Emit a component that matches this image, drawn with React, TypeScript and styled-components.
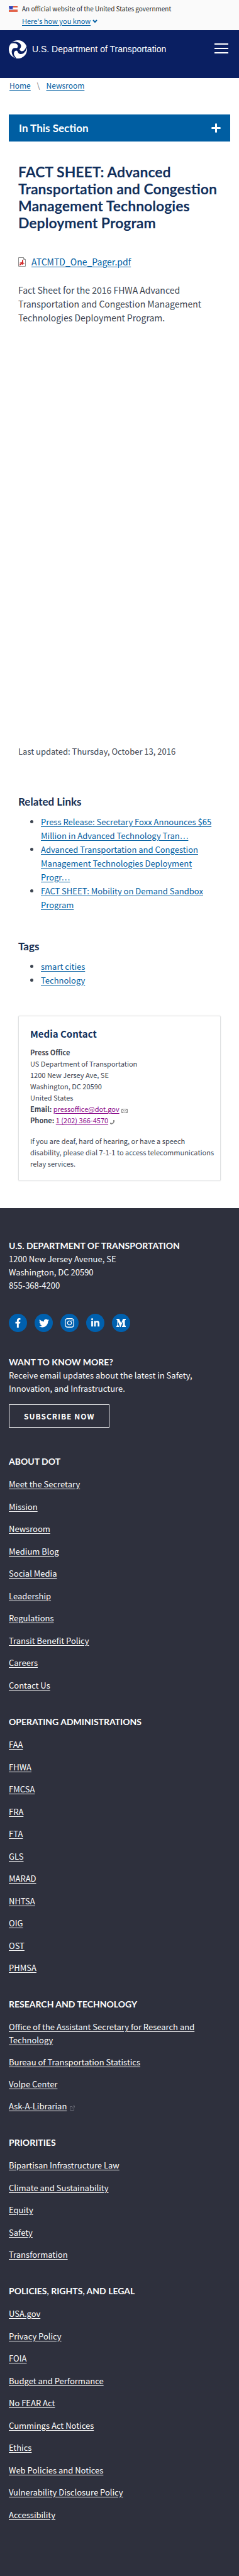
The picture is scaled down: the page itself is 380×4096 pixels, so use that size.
import React from "react";
import styled, { createGlobalStyle } from "styled-components";
import { FaFacebookF, FaTwitter, FaInstagram, FaLinkedinIn } from "react-icons/fa";

const sans = `"Noto Sans CJK SC", "Noto Sans", sans-serif`;
const lato = `Lato, "Noto Sans", sans-serif`;

const GlobalStyle = createGlobalStyle`
  *, *::before, *::after { box-sizing: border-box; }
  html { background: #2e303d; }
  body { margin: 0; background: #fff; color: #3d4551; font: 13px/22px ${sans}; }
  h1, h2, h3, p, ul, address { margin: 0; padding: 0; font-style: normal; }
  a { color: #005ea2; text-underline-offset: 2px; }
`;

const GovBanner = styled.section`
  display: flex;
  gap: 7px;
  padding: 6px 14px 7px;
  background: #fafafa;
  color: #1b1b1b;
  font-size: 10px;
  line-height: 15px;
`;

const Flag = styled.svg`
  flex: none;
  width: 14px;
  height: 9px;
  margin-top: 4px;
`;

const BannerText = styled.div`
  display: flex;
  flex-direction: column;
  align-items: flex-start;
  gap: 5px;
`;

const BannerButton = styled.button`
  display: flex;
  align-items: center;
  gap: 3px;
  padding: 0;
  border: 0;
  background: none;
  color: #005ea2;
  font: inherit;
  font-size: 11px;
  span { text-decoration: underline; text-underline-offset: 2px; }
`;

const Header = styled.header`
  display: flex;
  align-items: flex-start;
  justify-content: space-between;
  padding: 16px 17px 31px 14px;
  background: #0a1f62;
`;

const Brand = styled.a`
  display: flex;
  align-items: center;
  gap: 8px;
  color: #fff;
  font: 14px/29px "Liberation Sans", sans-serif;
  text-decoration: none;
`;

const MenuButton = styled.button`
  display: flex;
  flex-direction: column;
  gap: 5px;
  margin-top: 5px;
  padding: 0;
  border: 0;
  background: none;
  span { width: 22px; height: 2px; background: #fff; }
`;

const Breadcrumb = styled.nav`
  display: flex;
  gap: 10px;
  padding: 1px 15px 0;
  color: #71767a;
  font-size: 12px;
`;

const Main = styled.main`
  padding-bottom: 43px;
`;

const SectionToggle = styled.button`
  display: flex;
  align-items: center;
  justify-content: space-between;
  width: calc(100% - 28px);
  margin: 35px 14px 0;
  padding: 0 15px 0 16px;
  border: 0;
  background: #005ea2;
  color: #fff;
  font: bold 17px/43px ${lato};
`;

const Article = styled.article`
  padding: 0 29px;
`;

const Title = styled.h1`
  margin-top: 35px;
  color: #112f5c;
  font: bold 23px/27px ${lato};
`;

const FileLink = styled.p`
  display: flex;
  align-items: center;
  gap: 9px;
  margin-top: 37px;
  font-size: 14px;
`;

const Body = styled.p`
  margin-top: 23px;
  font-size: 14px;
`;

const Updated = styled.p`
  margin-top: 668px;
`;

const SubHeading = styled.h2<{ $space: number }>`
  margin-top: ${(p) => p.$space}px;
  color: #162e51;
  font: bold 17px/22px ${lato};
`;

const LinkList = styled.ul`
  && { margin-top: 10px; padding-left: 36px; }
`;

const Card = styled.section`
  margin-top: 45px;
  padding: 16px 8px 18px 18px;
  border: 1px solid #dfe1e2;
  border-radius: 2px;
  box-shadow: 0 0 2px #e6e6e6;
  font-size: 11px;
  line-height: 18px;
  a { color: #8b0a8b; }
  svg { margin-left: 3px; vertical-align: -3px; }
`;

const CardTitle = styled.h2`
  && { margin-bottom: 8px; }
  color: #112f5c;
  font: bold 15px/24px ${sans};
`;

const CardNote = styled.p`
  margin-top: 15px;
`;

const Footer = styled.footer`
  padding: 50px 14px 87px;
  background: #2e303d;
  color: #fff;
  line-height: 21px;
  a { color: #fff; }
`;

const FooterHeading = styled.h2`
  font: bold 14px/20px ${lato};
  text-transform: uppercase;
`;

const Social = styled.ul`
  display: flex;
  gap: 12px;
  && { margin: 35px 0 38px; }
  list-style: none;
`;

const SocialLink = styled.a`
  display: flex;
  align-items: center;
  justify-content: center;
  width: 29px;
  height: 29px;
  border-radius: 50%;
  background: #0060ae;
`;

const Subscribe = styled.button`
  display: block;
  margin: 15px 0 44px;
  padding: 0 23px;
  border: 1px solid #fff;
  background: none;
  color: #fff;
  font: bold 12px/35px ${sans};
  letter-spacing: 1px;
`;

const FooterNav = styled.nav`
  & + & { margin-top: 38px; }
`;

const FooterList = styled.ul<{ $even: number }>`
  && { margin-top: 15px; }
  list-style: none;
  li + li { margin-top: 14px; }
  li:nth-child(even) { margin-top: ${(p) => p.$even}px; }
  svg { margin-left: 5px; vertical-align: -3px; }
`;

const UsFlag = () => (
  <Flag viewBox="0 0 14 9" role="img" aria-label="U.S. flag">
    <rect width="14" height="9" fill="#fff" />
    <path d="M0 .5h14M0 2.5h14M0 4.5h14M0 6.5h14M0 8.5h14" stroke="#db3e1f" />
    <rect width="7" height="5" fill="#1e33b1" />
    <path d="M1 1.5h5M1 3.5h5" stroke="#a0a8dd" strokeDasharray="1 1" />
  </Flag>
);

const DotLogo = () => (
  <svg width="29" height="29" viewBox="0 0 100 100" aria-hidden="true">
    <circle cx="50" cy="50" r="50" fill="#fff" />
    {[0, 120, 240].map((a) => (
      <path key={a} transform={`rotate(${a} 50 50)`} fill="#0a1f62"
        d="M12 14 C38 3 63 11 67 29 C69 40 58 46 57 57 L43 55 C43 43 52 38 49 28 C45 17 31 14 14 18 Z" />
    ))}
  </svg>
);

const Chevron = () => (
  <svg width="8" height="6" viewBox="0 0 8 6" aria-hidden="true">
    <path d="M1 1l3 3 3-3" fill="none" stroke="#005ea2" strokeWidth="2" />
  </svg>
);

const Plus = () => (
  <svg width="15" height="15" viewBox="0 0 15 15" aria-hidden="true">
    <path d="M7.5 1.5v12M1.5 7.5h12" stroke="#fff" strokeWidth="3" strokeLinecap="round" />
  </svg>
);

const PdfIcon = () => (
  <svg width="12" height="15" viewBox="0 0 12 15" aria-hidden="true">
    <path d="M.5 .5h8l3 3v11H.5z" fill="#fff" stroke="#8f8f8f" />
    <path d="M8.5 .5v3h3" fill="none" stroke="#8f8f8f" />
    <path d="M2 12.5c3-1 5-4 5-8.500v8M2.500 9.500c2-1 5-1 7 .5" fill="none" stroke="#d02020" strokeWidth="1.500" />
  </svg>
);

const Mail = () => (
  <svg width="10" height="10" viewBox="0 0 10 10" aria-hidden="true">
    <path d="M.5 2.5h9v6h-9zM1 3l4 3L9 3M1 8l2.500-2.500M9 8L6.500 5.500" fill="none" stroke="#8a8a8a" />
  </svg>
);

const Phone = () => (
  <svg width="8" height="10" viewBox="0 0 8 10" aria-hidden="true">
    <path d="M1 7.5c3 1 5-1 5.500-4.500" fill="none" stroke="#888" strokeWidth="1.500" />
    <path d="M0 6l3 1v1.500L0 8zM5 2h2v3H5z" fill="#888" />
  </svg>
);

const External = () => (
  <svg width="8" height="10" viewBox="0 0 8 10" aria-hidden="true">
    <path d="M4 2.5H.5v6h6V5M3 6l4-4M5 1.500h2.500V4" fill="none" stroke="#62646f" />
  </svg>
);

const MediumIcon = () => (
  <svg width="15" height="13" viewBox="0 0 15 13" fill="#fff" aria-hidden="true">
    <path d="M0 0h4.500L7.700 7 10.500 0H15v1.500l-1.500 1V10l1.500 1.500V13H9v-1.500l1.300-1.300V4L6.800 13H6L2.800 4.500V10l1.700 1.800V13H0v-1.200L1.500 10V2.500L0 1z" />
  </svg>
);

const groups: { title: string; even: number; links: string[] }[] = [
  { title: "About DOT", even: 15, links: ["Meet the Secretary", "Mission", "Newsroom", "Medium Blog", "Social Media", "Leadership", "Regulations", "Transit Benefit Policy", "Careers", "Contact Us"] },
  { title: "Operating Administrations", even: 15, links: ["FAA", "FHWA", "FMCSA", "FRA", "FTA", "GLS", "MARAD", "NHTSA", "OIG", "OST", "PHMSA"] },
  { title: "Research and Technology", even: 14, links: ["Office of the Assistant Secretary for Research and Technology", "Bureau of Transportation Statistics", "Volpe Center", "Ask-A-Librarian"] },
  { title: "Priorities", even: 15, links: ["Bipartisan Infrastructure Law", "Climate and Sustainability", "Equity", "Safety", "Transformation"] },
  { title: "Policies, Rights, and Legal", even: 15, links: ["USA.gov", "Privacy Policy", "FOIA", "Budget and Performance", "No FEAR Act", "Cummings Act Notices", "Ethics", "Web Policies and Notices", "Vulnerability Disclosure Policy", "Accessibility"] },
];

const social = [
  { name: "Facebook", icon: <FaFacebookF size={15} /> },
  { name: "Twitter", icon: <FaTwitter size={16} /> },
  { name: "Instagram", icon: <FaInstagram size={17} /> },
  { name: "LinkedIn", icon: <FaLinkedinIn size={15} /> },
  { name: "Medium", icon: <MediumIcon /> },
];

export default function App() {
  return (
    <>
      <GlobalStyle />
      <GovBanner aria-label="Official website of the United States government">
        <UsFlag />
        <BannerText>
          <p>An official website of the United States government</p>
          <BannerButton type="button"><span>Here's how you know</span><Chevron /></BannerButton>
        </BannerText>
      </GovBanner>
      <Header>
        <Brand href="#"><DotLogo />U.S. Department of Transportation</Brand>
        <MenuButton type="button" aria-label="Menu"><span /><span /><span /></MenuButton>
      </Header>
      <Main>
        <Breadcrumb aria-label="Breadcrumb">
          <a href="#">Home</a><span>\</span><a href="#">Newsroom</a>
        </Breadcrumb>
        <SectionToggle type="button">In This Section<Plus /></SectionToggle>
        <Article>
          <Title>FACT SHEET: Advanced Transportation and Congestion Management Technologies Deployment Program</Title>
          <FileLink><PdfIcon /><a href="#">ATCMTD_One_Pager.pdf</a></FileLink>
          <Body>Fact Sheet for the 2016 FHWA Advanced Transportation and Congestion Management Technologies Deployment Program.</Body>
          <Updated>Last updated: Thursday, October 13, 2016</Updated>
          <SubHeading $space={58}>Related Links</SubHeading>
          <LinkList>
            <li><a href="#">Press Release: Secretary Foxx Announces $65 Million in Advanced Technology Tran…</a></li>
            <li><a href="#">Advanced Transportation and Congestion Management Technologies Deployment Progr…</a></li>
            <li><a href="#">FACT SHEET: Mobility on Demand Sandbox Program</a></li>
          </LinkList>
          <SubHeading $space={44}>Tags</SubHeading>
          <LinkList>
            <li><a href="#">smart cities</a></li>
            <li><a href="#">Technology</a></li>
          </LinkList>
          <Card>
            <CardTitle>Media Contact</CardTitle>
            <address>
              <b>Press Office</b><br />
              US Department of Transportation<br />
              1200 New Jersey Ave, SE<br />
              Washington, DC 20590<br />
              United States<br />
              <b>Email:</b> <a href="#">pressoffice@dot.gov</a><Mail /><br />
              <b>Phone:</b> <a href="#">1 (202) 366-4570</a><Phone />
            </address>
            <CardNote>If you are deaf, hard of hearing, or have a speech disability, please dial 7-1-1 to access telecommunications relay services.</CardNote>
          </Card>
        </Article>
      </Main>
      <Footer>
        <FooterHeading>U.S. Department of Transportation</FooterHeading>
        <address>1200 New Jersey Avenue, SE<br />Washington, DC 20590<br />855-368-4200</address>
        <Social>
          {social.map((s) => (
            <li key={s.name}><SocialLink href="#" aria-label={s.name}>{s.icon}</SocialLink></li>
          ))}
        </Social>
        <FooterHeading>Want to know more?</FooterHeading>
        <p>Receive email updates about the latest in Safety, Innovation, and Infrastructure.</p>
        <Subscribe type="button">SUBSCRIBE NOW</Subscribe>
        {groups.map((g) => (
          <FooterNav key={g.title} aria-label={g.title}>
            <FooterHeading>{g.title}</FooterHeading>
            <FooterList $even={g.even}>
              {g.links.map((l) => (
                <li key={l}><a href="#">{l}</a>{l === "Ask-A-Librarian" && <External />}</li>
              ))}
            </FooterList>
          </FooterNav>
        ))}
      </Footer>
    </>
  );
}
